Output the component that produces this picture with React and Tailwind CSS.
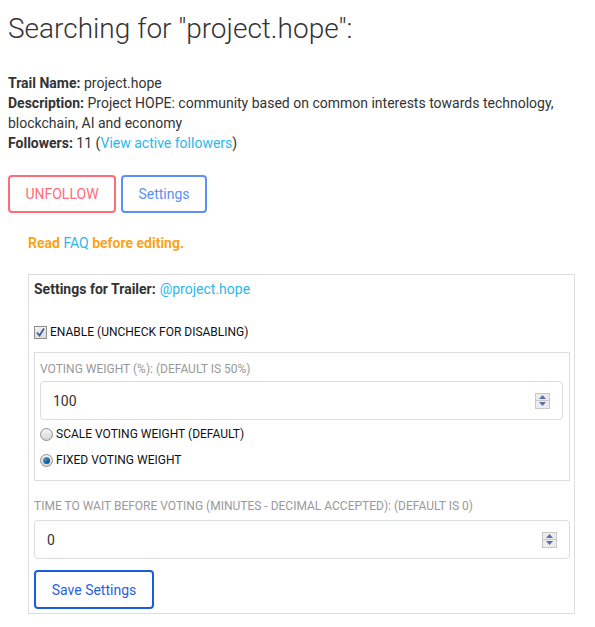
import React, { useState } from 'react';

const Spinner = () => (
  <div className="flex flex-col w-[15px] h-[16px] border border-[#c8c8c8] bg-[#ececec]">
    <div className="flex-1 flex items-center justify-center border-b border-[#c8c8c8]">
      <svg width="7" height="4" viewBox="0 0 7 4"><path d="M0 4 L3.5 0 L7 4 Z" fill="#5b6fb0" /></svg>
    </div>
    <div className="flex-1 flex items-center justify-center">
      <svg width="7" height="4" viewBox="0 0 7 4"><path d="M0 0 L3.5 4 L7 0 Z" fill="#5b6fb0" /></svg>
    </div>
  </div>
);

const Checkbox = ({ checked }) => (
  <span className="inline-flex w-[13px] h-[13px] border border-[#8f8f8f] bg-gradient-to-b from-[#f0f0f0] to-[#dcdcdc] items-center justify-center">
    {checked && (
      <svg width="11" height="11" viewBox="0 0 11 11">
        <path d="M2 5.5 L4.5 8.5 L9 1.5" fill="none" stroke="#3d5ba9" strokeWidth="1.8" />
      </svg>
    )}
  </span>
);

const Radio = ({ checked }) => (
  <span className="inline-flex w-[13px] h-[13px] rounded-full border border-[#8f8f8f] bg-gradient-to-b from-[#f4f4f4] to-[#d6d6d6] items-center justify-center">
    {checked && <span className="w-[7px] h-[7px] rounded-full bg-gradient-to-br from-[#4fb0e8] to-[#0b3d6e]" />}
  </span>
);

const NumberInput = ({ value }) => (
  <div className="h-[39px] border border-[#dcdcdc] rounded-[4px] flex items-center justify-between pl-3 pr-[12px] bg-white">
    <span className="text-[14px] text-[#333]">{value}</span>
    <Spinner />
  </div>
);

export default function App() {
  const [enabled] = useState(true);

  return (
    <div className="bg-white min-h-[627px] pl-2 pr-4 text-[#333] text-[14px] leading-5" style={{ fontFamily: 'Roboto, "Liberation Sans", sans-serif' }}>
      <h1 className="pt-[12px] text-[28px] leading-[34px] font-light text-[#333]">Searching for "project.hope":</h1>

      <div className="mt-[27px]">
        <div><b className="font-bold">Trail Name:</b> project.hope</div>
        <div><b className="font-bold">Description:</b> Project HOPE: community based on common interests towards technology, blockchain, AI and economy</div>
        <div>
          <b className="font-bold">Followers:</b> 11 (<a className="text-[#2db7e7]">View active followers</a>)
        </div>
      </div>

      <div className="mt-[22px] flex gap-[5px]">
        <button className="h-[38px] w-[108px] border-2 border-[#ff6b77] rounded-[4px] text-[#ff6b77] text-[14px] pb-[1px]">UNFOLLOW</button>
        <button className="h-[38px] w-[86px] border-2 border-[#5c8ff7] rounded-[4px] text-[#5c8ff7] text-[14px] pb-[1px]">Settings</button>
      </div>

      <div className="mt-[20px] pl-5 font-bold text-[#f9a51a]">
        Read <a className="font-normal text-[#2db7e7]">FAQ</a> before editing.
      </div>

      <div className="mt-[21px] ml-5 w-[547px] border border-[#dddddd] pl-[5px] pr-[4px] pt-[4px] pb-[4px]">
        <div className="h-5 flex items-center">
          <b className="font-bold">Settings for Trailer:</b>
          <a className="ml-1 text-[#2db7e7]">@project.hope</a>
        </div>

        <div className="mt-[23px] h-[20px] flex items-center gap-[3px] text-[12px] text-[#111]">
          <Checkbox checked={enabled} />
          <span>ENABLE (UNCHECK FOR DISABLING)</span>
        </div>

        <div className="mt-[10px] border border-[#dddddd] px-[5px] pt-[6px] pb-[10px]">
          <div className="h-5 flex items-center text-[12px] text-[#999]">VOTING WEIGHT (%): (DEFAULT IS 50%)</div>
          <div className="mt-[2px] mr-[1px]">
            <NumberInput value="100" />
          </div>
          <div className="mt-[4px] h-[20px] flex items-center gap-[3px] text-[12px] text-[#111]">
            <Radio />
            <span>SCALE VOTING WEIGHT (DEFAULT)</span>
          </div>
          <div className="mt-[6px] h-[20px] flex items-center gap-[3px] text-[12px] text-[#111]">
            <Radio checked />
            <span>FIXED VOTING WEIGHT</span>
          </div>
        </div>

        <div className="mt-[15px] h-5 flex items-center text-[12px] text-[#999]">TIME TO WAIT BEFORE VOTING (MINUTES - DECIMAL ACCEPTED): (DEFAULT IS 0)</div>
        <div className="mt-[4px]">
          <NumberInput value="0" />
        </div>
        <button className="mt-[11px] h-[39px] w-[120px] border-2 border-[#1a5be0] rounded-[4px] text-[#1f5fe6] text-[14px]">Save Settings</button>
      </div>
    </div>
  );
}
